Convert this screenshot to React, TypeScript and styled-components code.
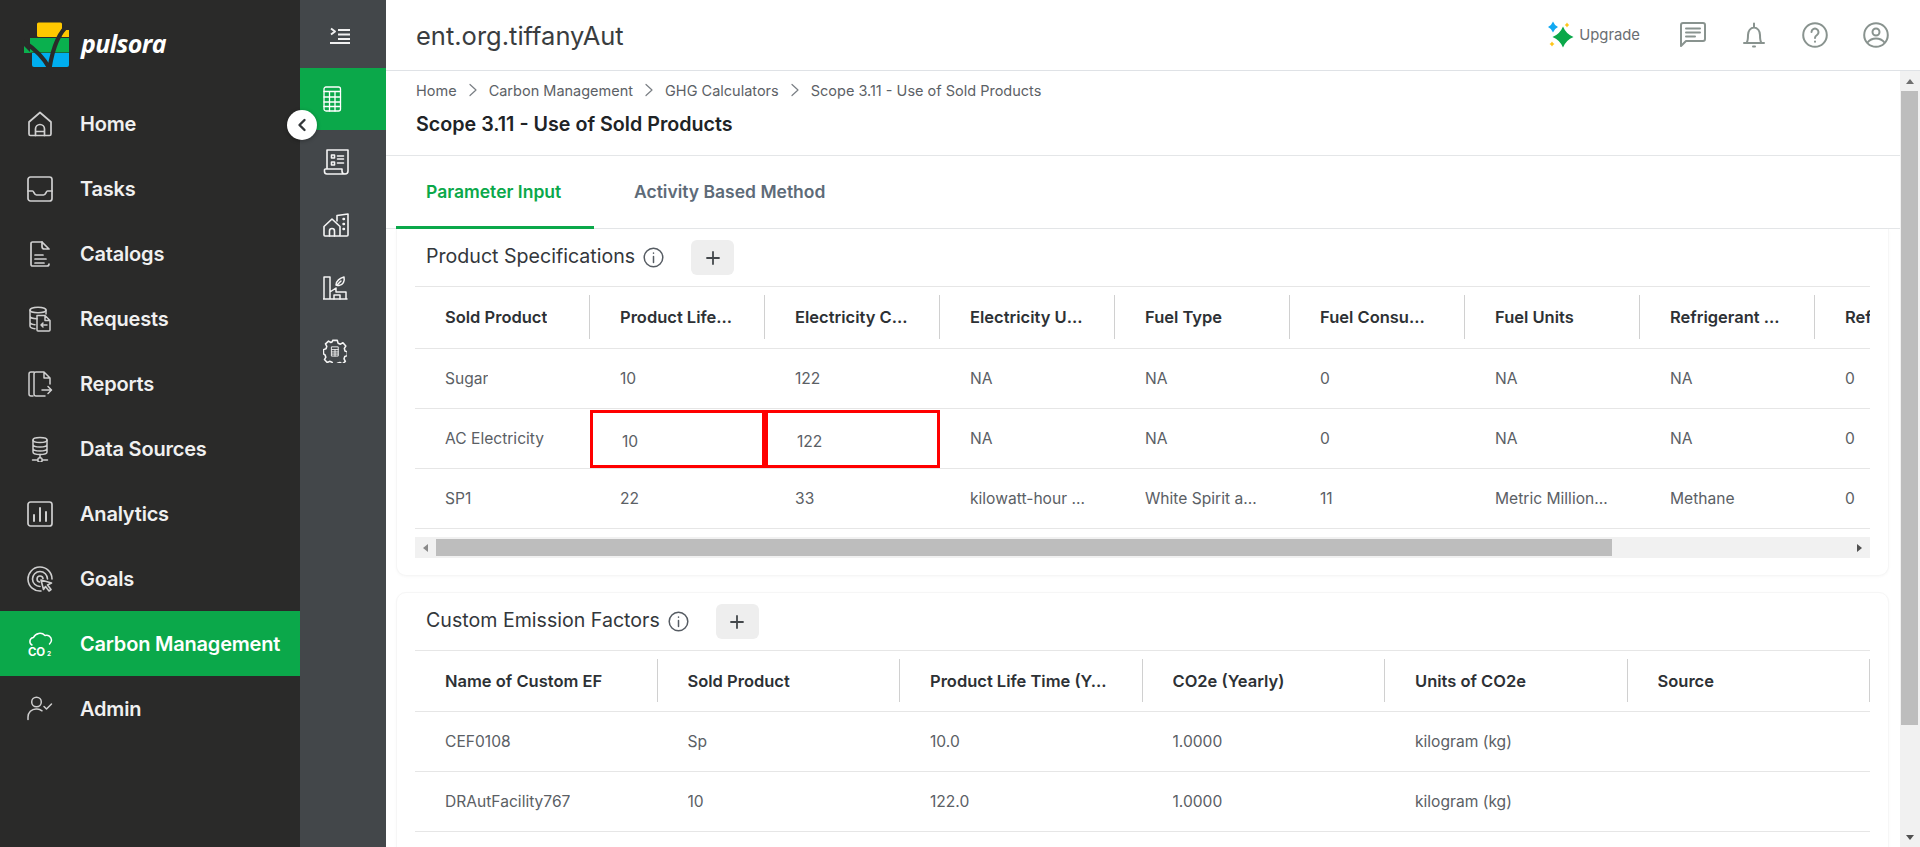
import React from 'react';
import styled, { createGlobalStyle } from 'styled-components';

const GlobalStyle = createGlobalStyle`
  * { box-sizing: border-box; }
  html, body { margin: 0; padding: 0; height: 100%; overflow: hidden; background: #fff; }
  body { font-family: 'Inter', 'Noto Sans', Arial, sans-serif; }
`;

const Page = styled.div`
  display: flex;
  position: relative;
  width: 100%;
  height: 847px;
  overflow: hidden;
`;

/* sidebar */
const Sidebar = styled.aside`
  flex: 0 0 300px;
  background: #2a2a29;
`;

const LogoRow = styled.div`
  display: flex;
  align-items: flex-start;
  gap: 11px;
  height: 91px;
  padding: 22px 0 0 24px;
`;

const LogoText = styled.span`
  font-family: 'Open Sans', Arial, sans-serif;
  font-size: 25px;
  font-weight: 700;
  font-style: italic;
  letter-spacing: -0.6px;
  line-height: 42px;
  color: #fff;
`;

const NavItem = styled.div<{ $active?: boolean }>`
  display: flex;
  align-items: center;
  height: 65px;
  padding-left: 27px;
  gap: 27px;
  font-size: 20px;
  font-weight: 600;
  letter-spacing: -0.2px;
  white-space: nowrap;
  color: ${p => (p.$active ? '#fff' : '#f0f0f0')};
  background: ${p => (p.$active ? '#0ba84a' : 'transparent')};
`;

const NavLabel = styled.span`
  padding-top: 1px;
`;

const Rail = styled.nav`
  flex: 0 0 86px;
  background: #43474a;
  padding-top: 68px;
`;

const RailToggle = styled.div`
  position: absolute;
  left: 330px;
  top: 26px;
  display: flex;
`;

const RailItem = styled.div<{ $active?: boolean }>`
  display: flex;
  align-items: center;
  height: ${p => (p.$active ? 62 : 63)}px;
  padding-left: 23px;
  background: ${p => (p.$active ? '#0ba84a' : 'transparent')};
`;

const CollapseButton = styled.div`
  position: absolute;
  left: 287px;
  top: 110px;
  width: 30px;
  height: 30px;
  border-radius: 50%;
  background: #fff;
  box-shadow: 0 1px 4px rgba(0, 0, 0, 0.3);
  display: flex;
  align-items: center;
  justify-content: center;
`;

/* main */
const Main = styled.main`
  flex: 1;
  min-width: 0;
  display: flex;
  flex-direction: column;
`;

const TopBar = styled.header`
  flex: 0 0 71px;
  display: flex;
  align-items: center;
  padding: 0 31px 0 30px;
  border-bottom: 1px solid #dfe2e6;
`;

const OrgName = styled.div`
  flex: 1;
  font-size: 25.5px;
  font-weight: 400;
  color: #3a3d40;
`;

const Upgrade = styled.div`
  display: flex;
  align-items: center;
  gap: 5px;
  margin-right: 40px;
  font-size: 14.8px;
  color: #6a6e72;
`;

const TopIcons = styled.div`
  display: flex;
  align-items: center;
  gap: 35px;
`;

const Body = styled.div`
  flex: 1;
  min-height: 0;
  display: flex;
`;

const Content = styled.div`
  flex: 1;
  min-width: 0;
  overflow: hidden;
`;

const PageHead = styled.div`
  height: 85px;
  padding: 9px 0 0 30px;
  border-bottom: 1px solid #e4e6e8;
`;

const Crumbs = styled.div`
  display: flex;
  align-items: center;
  gap: 9px;
  height: 20px;
  font-size: 14.5px;
  color: #5c6166;
`;

const PageTitle = styled.h1`
  margin: 12px 0 0;
  font-size: 19.7px;
  line-height: 24px;
  font-weight: 600;
  color: #202326;
`;

const Tabs = styled.div`
  display: flex;
  height: 73px;
  padding-left: 10px;
  gap: 10px;
  border-bottom: 1px solid #e4e6e8;
`;

const Tab = styled.div<{ $active?: boolean }>`
  display: flex;
  align-items: center;
  padding: 1px 30px 0;
  width: ${p => (p.$active ? '198px' : 'auto')};
  font-size: 17.5px;
  font-weight: 600;
  white-space: nowrap;
  color: ${p => (p.$active ? '#0ba84a' : '#5e6b78')};
  border-bottom: 3px solid ${p => (p.$active ? '#0ba84a' : 'transparent')};
  margin-bottom: -1px;
`;

const Card = styled.section<{ $first?: boolean }>`
  margin: ${p => (p.$first ? '0 11px 16px 10px' : '0 11px 0 10px')};
  padding: ${p => (p.$first ? '0 18px' : '0 18px 40px')};
  height: ${p => (p.$first ? '347px' : 'auto')};
  background: #fff;
  border: 1px solid #f6f6f6;
  border-top-width: ${p => (p.$first ? 0 : 1)}px;
  border-radius: ${p => (p.$first ? '0 0 10px 10px' : '10px')};
  box-shadow: 0 1px 3px rgba(0, 0, 0, 0.03);
`;

const CardHead = styled.div`
  display: flex;
  align-items: center;
  height: 57px;
  padding-left: 11px;
  font-size: 19.6px;
  color: #33373b;
`;

const CardTitle = styled.span`
  position: relative;
  top: -2px;
`;

const CardInfo = styled.span`
  display: flex;
  margin: 0 27px 0 8px;
`;

const AddButton = styled.div`
  width: 43px;
  height: 35px;
  border-radius: 6px;
  background: #eeeeee;
  display: flex;
  align-items: center;
  justify-content: center;
`;

const TableFrame = styled.div`
  border-top: 1px solid #e6e6e6;
  overflow: hidden;
`;

const Row = styled.div<{ $cols: string; $height: number }>`
  display: grid;
  grid-template-columns: ${p => p.$cols};
  height: ${p => p.$height}px;
  border-bottom: 1px solid #e6e6e6;
`;

const HeadCell = styled.div`
  display: flex;
  align-items: center;
  min-width: 0;
  margin: 8px 0 9px;
  padding: 0 28px 0 30px;
  border-right: 1px solid #d0d0d0;
  font-size: 16.5px;
  font-weight: 600;
  color: #2d3135;
`;

const Clip = styled.span`
  overflow: hidden;
  white-space: nowrap;
  text-overflow: ellipsis;
`;

const Cell = styled.div`
  display: flex;
  align-items: center;
  min-width: 0;
  padding: 0 30px;
  font-size: 15.6px;
  color: #5b6065;
`;

const FlaggedCell = styled(Cell)`
  margin-top: 1px;
  padding: 4px 20px 0 29px;
  border: 3px solid #ff0000;
`;

const HScroll = styled.div`
  display: flex;
  align-items: center;
  height: 21px;
  margin-top: 8px;
  background: #f1f1f1;
`;

const ScrollEnd = styled.div`
  flex: 0 0 21px;
  display: flex;
  align-items: center;
  justify-content: center;
`;

const HThumb = styled.div`
  flex: 0 0 1176px;
  height: 17px;
  background: #bdbdbd;
`;

const HGap = styled.div`
  flex: 1;
`;

const VScroll = styled.div`
  flex: 0 0 20px;
  display: flex;
  flex-direction: column;
  align-items: center;
  background: #f1f1f1;
`;

const VArrowCell = styled.div`
  display: flex;
  align-items: center;
  justify-content: center;
  height: 20px;
  width: 100%;
`;

const VThumb = styled.div`
  flex: 0 0 634px;
  width: 17px;
  margin-right: 1px;
  background: #bdbdbd;
`;

const VGap = styled.div`
  flex: 1;
`;

const Arrow = styled.span<{ $dir: 'up' | 'down' | 'left' | 'right' }>`
  width: 0;
  height: 0;
  border: 4px solid transparent;
  ${p => (p.$dir === 'up' ? 'border-top: 0; border-bottom: 5px solid #6f6f6f;' : '')}
  ${p => (p.$dir === 'down' ? 'border-bottom: 0; border-top: 5px solid #505050;' : '')}
  ${p => (p.$dir === 'left' ? 'border-left: 0; border-right: 5px solid #8a8a8a;' : '')}
  ${p => (p.$dir === 'right' ? 'border-right: 0; border-left: 5px solid #505050;' : '')}
`;

const IconSvg = styled.svg.attrs({ fill: 'none', strokeLinecap: 'round', strokeLinejoin: 'round' })<{ $box?: number }>`
  flex: none;
  display: block;
  width: ${p => p.$box ?? 26}px;
  height: ${p => p.$box ?? 26}px;
`;

type IconProps = { color?: string };
const NAV = '#cfcfcf';
const TOP = '#89938f';

const Logo = () => (
  <IconSvg $box={46} viewBox="0 0 46 46">
    <rect x="13" y="0.500" width="25" height="14.500" rx="1.500" fill="#ffc800" />
    <path d="M38 8h7v7h-7z" fill="#ffc800" />
    <path d="M6 16h39v14.500H6z" fill="#0ab04e" />
    <path d="M0 24l7 7H0z" fill="#0ab04e" />
    <path d="M8 31h37v12a2 2 0 0 1-2 2H10a2 2 0 0 1-2-2z" fill="#00aeef" />
    <path d="M45.500 2C36 9 29 24 25.500 46.500M-1 19C8 25 19 34 25.500 46.500" stroke="#2a2a29" strokeWidth="4.200" />
  </IconSvg>
);

const HomeIcon = ({ color = NAV }: IconProps) => (
  <IconSvg viewBox="0 0 24 26" stroke={color} strokeWidth="1.7">
    <path d="M1 23V11L12 1.500 23 11v12a1.500 1.500 0 0 1-1.500 1.500h-19A1.500 1.500 0 0 1 1 23z" />
    <path d="M7.500 24.500V18a4.500 4.500 0 0 1 9 0v6.500M7.500 20.500h9" />
  </IconSvg>
);

const TasksIcon = ({ color = NAV }: IconProps) => (
  <IconSvg viewBox="0 0 26 26" stroke={color} strokeWidth="1.700">
    <rect x="1" y="1" width="24" height="24" rx="2.500" />
    <path d="M1 15h4.500c1.500 0 1.500 4 4 4h7c2.500 0 2.500-4 4-4H25" />
  </IconSvg>
);

const CatalogIcon = ({ color = NAV }: IconProps) => (
  <IconSvg viewBox="0 0 24 26" stroke={color} strokeWidth="1.700">
    <path d="M14 1H4.500A1.500 1.500 0 0 0 3 2.500v21A1.500 1.500 0 0 0 4.500 25H19a2 2 0 0 0 2-2" />
    <path d="M14 1v4.500A2.500 2.500 0 0 0 16.500 8H21z" />
    <path d="M7 14h8M7 18h11M7 22h9" />
  </IconSvg>
);

const RequestIcon = ({ color = NAV }: IconProps) => (
  <IconSvg viewBox="0 0 24 26" stroke={color} strokeWidth="1.500">
    <ellipse cx="10" cy="4" rx="8" ry="2.800" />
    <path d="M2 4v16c0 1.500 2 2.500 5 2.800M18 4v4M2 10c0 1.500 3 2.800 7 2.800M2 16c0 1.500 2 2.500 5 2.700" />
    <path d="M9 9.500h8l5 5V24a1 1 0 0 1-1 1H10a1 1 0 0 1-1-1zM17 9.500v5h5M19 19h-6M15 17l-2 2 2 2" />
  </IconSvg>
);

const ReportIcon = ({ color = NAV }: IconProps) => (
  <IconSvg viewBox="0 0 24 26" stroke={color} strokeWidth="1.500">
    <path d="M6 1H3a2 2 0 0 0-2 2v20a2 2 0 0 0 2 2h2" />
    <path d="M16 1H8a2 2 0 0 0-2 2v20a2 2 0 0 0 2 2h9M16 1l6 6h-6zM22 7v6" />
    <path d="M14 19h9M20 15.500l3.500 3.500-3.500 3.500" />
  </IconSvg>
);

const DataIcon = ({ color = NAV }: IconProps) => (
  <IconSvg viewBox="0 0 24 26" stroke={color} strokeWidth="1.500">
    <ellipse cx="12" cy="4" rx="7" ry="2.500" />
    <path d="M5 4v12c0 1.500 3 2.500 7 2.500s7-1 7-2.500V4M5 8.500c0 1.500 3 2.500 7 2.500s7-1 7-2.500M5 12.500c0 1.500 3 2.500 7 2.500s7-1 7-2.500" />
    <path d="M12 18.500v3M4.500 24h5M14.500 24h5" />
    <circle cx="12" cy="24" r="2.200" />
  </IconSvg>
);

const AnalyticsIcon = ({ color = NAV }: IconProps) => (
  <IconSvg viewBox="0 0 26 26" stroke={color} strokeWidth="1.700">
    <rect x="1" y="1" width="24" height="24" rx="2.500" />
    <path d="M7 14v6M13 7v13M19 11v9" strokeWidth="2" />
  </IconSvg>
);

const GoalIcon = ({ color = NAV }: IconProps) => (
  <IconSvg viewBox="0 0 26 26" stroke={color} strokeWidth="1.600">
    <path d="M14 25A12 12 0 1 1 25 13" />
    <path d="M13 20.500A7.500 7.500 0 1 1 20.500 13" />
    <path d="M12.500 16A3 3 0 1 1 16 12.500" />
    <path d="M14 14l10.500 3-4 2 3.500 4.500-2 1.500-3.500-4.500-2 3z" />
  </IconSvg>
);

const CarbonIcon = ({ color = '#fff' }: IconProps) => (
  <IconSvg viewBox="0 0 26 26" stroke={color} strokeWidth="1.500">
    <path d="M5 14a4 4 0 0 1 1.500-7.500A7 7 0 0 1 18 4.500a5 5 0 0 1 6.500 4.500c0 2-1 3-2 4" />
    <text x="1" y="24.500" fontFamily="Inter, sans-serif" fontSize="11.500" fontWeight="700" fill={color} stroke="none">CO</text>
    <text x="20" y="25" fontFamily="Inter, sans-serif" fontSize="6.500" fontWeight="700" fill={color} stroke="none">2</text>
  </IconSvg>
);

const AdminIcon = ({ color = NAV }: IconProps) => (
  <IconSvg viewBox="0 0 26 26" stroke={color} strokeWidth="1.500">
    <circle cx="9.500" cy="6" r="4.800" />
    <path d="M1 23.500V21a8 8 0 0 1 8-8h1a8 8 0 0 1 5 1.800" />
    <path d="M17 10.500l2.500 2.500 5-5" />
  </IconSvg>
);

const ToggleIcon = () => (
  <IconSvg $box={20} viewBox="0 0 20 18" stroke="#f0f0f0" strokeWidth="2" strokeLinecap="butt">
    <path d="M1 1.500l4 3-4 3M8 3h12M8 7.500h12M8 12h12M0 16h20" strokeLinecap="butt" />
  </IconSvg>
);

const CalcIcon = () => (
  <IconSvg viewBox="0 0 26 26" stroke="#fff" strokeWidth="1.300">
    <rect x="1" y="1" width="16.500" height="24" rx="2" />
    <path d="M1 5.500h16.500M1 11h16.500M1 16h16.500M1 20.500h16.500M6.500 5.500V25M12 5.500V25" />
  </IconSvg>
);

const ScrollIcon = () => (
  <IconSvg viewBox="0 0 26 26" stroke="#f4f4f4" strokeWidth="1.600">
    <path d="M4 20V1h21v21a3 3 0 0 1-3 3H4a2.500 2.500 0 0 1-2.500-2.500V21a1 1 0 0 1 1-1H19v2a3 3 0 0 0 3 3" />
    <path d="M8.500 6h3v3h-3zM8.500 13h3v3h-3zM14.500 7h6M14.500 10h6M14.500 14h6" />
  </IconSvg>
);

const BuildingIcon = () => (
  <IconSvg viewBox="0 0 26 24" stroke="#f4f4f4" strokeWidth="1.600">
    <path d="M1 13.500L9 6l8 7.500V22a1 1 0 0 1-1 1H2a1 1 0 0 1-1-1z" />
    <path d="M6.500 23v-5a2.500 2.500 0 0 1 5 0v5M14 8V2.500L25 1v21a1 1 0 0 1-1 1h-7" />
    <path d="M20.500 6h.5M20.500 11h.5M20.500 16h.5" strokeWidth="2.400" />
  </IconSvg>
);

const FactoryIcon = () => (
  <IconSvg viewBox="0 0 26 24" stroke="#f4f4f4" strokeWidth="1.500">
    <path d="M1 1h6v22M1 1v22M0 23h24M7 16l6-4v4l10 0v7" />
    <path d="M11 23v-4h6v4" />
    <path d="M13 9c0-4 4-7 8-8 1 4-1 8-5 8.500-1 0-2-.200-3-.500zM14 9l4-4" />
  </IconSvg>
);

const GearCalcIcon = () => (
  <IconSvg $box={24} viewBox="0 0 26 26" stroke="#f4f4f4" strokeWidth="1.700">
    <path d="M10.500 1.500h5l.8 3 2.600 1.100 2.700-1.500 3.100 3.600-1.600 2.500.7 2.800 2.600 1v4l-2.800 1-.8 2.500 1.400 2.800-3.400 2.800-2.500-1.700-2.700.8-.8 1.300h-4.200l-.8-2.400-2.600-.9-2.600 1.300-3-3.200 1.500-2.600-.9-2.500L.5 16v-4.500l2.800-1 .8-2.500-1.400-2.700 3.300-3 2.500 1.500 1.500-.8z" />
    <path d="M9.500 8.500h7v10h-7zM9.500 11.500h7M9.500 14h7M9.500 16.300h7M13 11.500v7" strokeWidth="1" />
  </IconSvg>
);

const Sparkle = () => (
  <IconSvg $box={30} viewBox="0 0 30 30">
    <path d="M19 6.500Q22 14 29.500 17Q22 20 19 27.500Q16 20 8.500 17Q16 14 19 6.500z" fill="#0ba84a" />
    <path d="M9 1.500Q10.500 5.500 14 7Q10.500 8.500 9 12.500Q7.500 8.500 4 7Q7.500 5.500 9 1.500z" fill="#12a9f2" />
    <path d="M23 2.500Q23.800 4.300 25.300 5Q23.800 5.700 23 7.500Q22.200 5.700 20.700 5Q22.200 4.300 23 2.500zM8 21.500Q8.800 23.300 10.500 24Q8.800 24.700 8 26.500Q7.200 24.700 5.500 24Q7.200 23.300 8 21.500z" fill="#ffc61a" />
  </IconSvg>
);

const MessageIcon = () => (
  <IconSvg viewBox="0 0 26 26" stroke={TOP} strokeWidth="2">
    <path d="M1 24V3a2 2 0 0 1 2-2h20a2 2 0 0 1 2 2v14a2 2 0 0 1-2 2H6z" />
    <path d="M6 6.500h14M6 10.500h14M6 14.500h9" />
  </IconSvg>
);

const BellIcon = () => (
  <IconSvg viewBox="0 0 26 26" stroke={TOP} strokeWidth="2">
    <path d="M3 21h20M5.500 21c1.500-2 1.500-4 1.500-8 0-4 2.500-7.500 6-7.500s6 3.500 6 7.500c0 4 0 6 1.500 8M13 1.500v4" />
    <path d="M12 24.500h2" />
  </IconSvg>
);

const HelpIcon = () => (
  <IconSvg viewBox="0 0 26 26" stroke={TOP} strokeWidth="2">
    <circle cx="13" cy="13" r="11.800" />
    <path d="M9.500 10a3.500 3.500 0 1 1 5.500 3c-1.300.9-2 1.500-2 3" />
    <path d="M13 19.500v.2" />
  </IconSvg>
);

const UserIcon = () => (
  <IconSvg viewBox="0 0 26 26" stroke={TOP} strokeWidth="2">
    <circle cx="13" cy="13" r="11.800" />
    <circle cx="13" cy="10" r="3.500" />
    <path d="M4.500 20.500c2-2.500 5-4 8.500-4s6.500 1.500 8.500 4" />
  </IconSvg>
);

const ChevronLeft = () => (
  <IconSvg $box={14} viewBox="0 0 14 14" stroke="#33373a" strokeWidth="2.400">
    <path d="M9.500 2L4.500 7l5 5" />
  </IconSvg>
);

const CrumbSep = () => (
  <IconSvg $box={14} viewBox="0 0 14 14" stroke="#7a7f84" strokeWidth="1.200">
    <path d="M4 1.500L10 7l-6 5.500" />
  </IconSvg>
);

const InfoIcon = () => (
  <IconSvg $box={21} viewBox="0 0 21 21" stroke="#565c63" strokeWidth="1.500">
    <circle cx="10.500" cy="10.500" r="9.300" />
    <path d="M10.500 9.500v6M10.500 6v.2" />
  </IconSvg>
);

const PlusIcon = () => (
  <IconSvg $box={14} viewBox="0 0 14 14" stroke="#43474b" strokeWidth="1.800">
    <path d="M7 1v12M1 7h12" />
  </IconSvg>
);

const navItems = [
  { label: 'Home', Icon: HomeIcon },
  { label: 'Tasks', Icon: TasksIcon },
  { label: 'Catalogs', Icon: CatalogIcon },
  { label: 'Requests', Icon: RequestIcon },
  { label: 'Reports', Icon: ReportIcon },
  { label: 'Data Sources', Icon: DataIcon },
  { label: 'Analytics', Icon: AnalyticsIcon },
  { label: 'Goals', Icon: GoalIcon },
  { label: 'Carbon Management', Icon: CarbonIcon, active: true },
  { label: 'Admin', Icon: AdminIcon },
];

const crumbs = ['Home', 'Carbon Management', 'GHG Calculators', 'Scope 3.11 - Use of Sold Products'];

const specCols = 'repeat(9, 175px)';
const specHead = [
  'Sold Product',
  'Product Life Time (Years)',
  'Electricity Consumption',
  'Electricity Units',
  'Fuel Type',
  'Fuel Consumption',
  'Fuel Units',
  'Refrigerant Type',
  'Refrigerant Leakage',
];
const specRows = [
  ['Sugar', '10', '122', 'NA', 'NA', '0', 'NA', 'NA', '0'],
  ['AC Electricity', '10', '122', 'NA', 'NA', '0', 'NA', 'NA', '0'],
  ['SP1', '22', '33', 'kilowatt-hour (kWh)', 'White Spirit and more', '11', 'Metric Million Btu', 'Methane', '0'],
];

const efCols = 'repeat(6, 1fr)';
const efHead = ['Name of Custom EF', 'Sold Product', 'Product Life Time (Years)', 'CO2e (Yearly)', 'Units of CO2e', 'Source'];
const efRows = [
  ['CEF0108', 'Sp', '10.0', '1.0000', 'kilogram (kg)', ''],
  ['DRAutFacility767', '10', '122.0', '1.0000', 'kilogram (kg)', ''],
];

const App: React.FC = () => {
  return (
    <Page>
      <GlobalStyle />
      <Sidebar>
        <LogoRow>
          <Logo />
          <LogoText>pulsora</LogoText>
        </LogoRow>
        {navItems.map(({ label, Icon, active }) => (
          <NavItem key={label} $active={active}>
            <Icon />
            <NavLabel>{label}</NavLabel>
          </NavItem>
        ))}
      </Sidebar>

      <Rail>
        <RailItem $active>
          <CalcIcon />
        </RailItem>
        <RailItem>
          <ScrollIcon />
        </RailItem>
        <RailItem>
          <BuildingIcon />
        </RailItem>
        <RailItem>
          <FactoryIcon />
        </RailItem>
        <RailItem>
          <GearCalcIcon />
        </RailItem>
      </Rail>
      <RailToggle>
        <ToggleIcon />
      </RailToggle>
      <CollapseButton>
        <ChevronLeft />
      </CollapseButton>

      <Main>
        <TopBar>
          <OrgName>ent.org.tiffanyAut</OrgName>
          <Upgrade>
            <Sparkle />
            Upgrade
          </Upgrade>
          <TopIcons>
            <MessageIcon />
            <BellIcon />
            <HelpIcon />
            <UserIcon />
          </TopIcons>
        </TopBar>
        <Body>
          <Content>
            <PageHead>
              <Crumbs>
                {crumbs.map((c, i) => (
                  <React.Fragment key={c}>
                    {i > 0 && <CrumbSep />}
                    <span>{c}</span>
                  </React.Fragment>
                ))}
              </Crumbs>
              <PageTitle>Scope 3.11 - Use of Sold Products</PageTitle>
            </PageHead>
            <Tabs>
              <Tab $active>Parameter Input</Tab>
              <Tab>Activity Based Method</Tab>
            </Tabs>

            <Card $first>
              <CardHead>
                <CardTitle>Product Specifications</CardTitle>
                <CardInfo>
                  <InfoIcon />
                </CardInfo>
                <AddButton>
                  <PlusIcon />
                </AddButton>
              </CardHead>
              <TableFrame>
                <Row $cols={specCols} $height={62}>
                  {specHead.map(h => (
                    <HeadCell key={h}>
                      <Clip>{h}</Clip>
                    </HeadCell>
                  ))}
                </Row>
                {specRows.map((row, r) => (
                  <Row key={r} $cols={specCols} $height={60}>
                    {row.map((v, c) =>
                      r === 1 && (c === 1 || c === 2) ? (
                        <FlaggedCell key={c}>
                          <Clip>{v}</Clip>
                        </FlaggedCell>
                      ) : (
                        <Cell key={c}>
                          <Clip>{v}</Clip>
                        </Cell>
                      )
                    )}
                  </Row>
                ))}
              </TableFrame>
              <HScroll>
                <ScrollEnd>
                  <Arrow $dir="left" />
                </ScrollEnd>
                <HThumb />
                <HGap />
                <ScrollEnd>
                  <Arrow $dir="right" />
                </ScrollEnd>
              </HScroll>
            </Card>

            <Card>
              <CardHead>
                <CardTitle>Custom Emission Factors</CardTitle>
                <CardInfo>
                  <InfoIcon />
                </CardInfo>
                <AddButton>
                  <PlusIcon />
                </AddButton>
              </CardHead>
              <TableFrame>
                <Row $cols={efCols} $height={61}>
                  {efHead.map(h => (
                    <HeadCell key={h}>
                      <Clip>{h}</Clip>
                    </HeadCell>
                  ))}
                </Row>
                {efRows.map((row, r) => (
                  <Row key={r} $cols={efCols} $height={60}>
                    {row.map((v, c) => (
                      <Cell key={c}>
                        <Clip>{v}</Clip>
                      </Cell>
                    ))}
                  </Row>
                ))}
              </TableFrame>
            </Card>
          </Content>
          <VScroll>
            <VArrowCell>
              <Arrow $dir="up" />
            </VArrowCell>
            <VThumb />
            <VGap />
            <VArrowCell>
              <Arrow $dir="down" />
            </VArrowCell>
          </VScroll>
        </Body>
      </Main>
    </Page>
  );
};

export default App;
